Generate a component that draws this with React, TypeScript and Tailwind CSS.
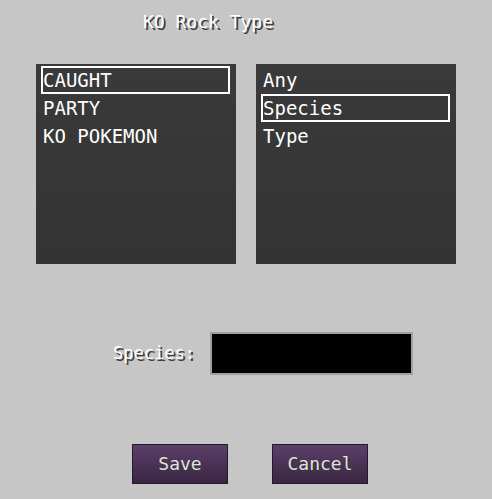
import React, { useState } from 'react';

const font = "font-['DejaVu_Sans_Mono','Liberation_Mono',monospace]";

const ListPanel: React.FC<{ items: string[]; selected: number; onSelect: (i: number) => void }> = ({ items, selected, onSelect }) => (
  <div className="w-[200px] h-[200px] bg-linear-to-b from-[#3a3a3a] to-[#333333] pt-[2px] pl-[5px]">
    {items.map((item, i) => (
      <div
        key={item}
        onClick={() => onSelect(i)}
        className={`w-[189px] h-[28px] border-2 flex items-center text-[19px] leading-none text-white ${
          i === selected ? 'border-white' : 'border-transparent'
        }`}
      >
        {item}
      </div>
    ))}
  </div>
);

export default function App() {
  const [source, setSource] = useState(0);
  const [mode, setMode] = useState(1);

  return (
    <div className={`w-[492px] h-[499px] bg-[#c6c6c6] flex flex-col ${font}`}>
      <div className="pt-[12px] pl-[143px] h-[64px] text-[18px] leading-[20px] text-white [text-shadow:2px_2px_0_#3f3f3f]">
        KO Rock Type
      </div>

      <div className="flex gap-[20px] pl-[36px]">
        <ListPanel items={['CAUGHT', 'PARTY', 'KO POKEMON']} selected={source} onSelect={setSource} />
        <ListPanel items={['Any', 'Species', 'Type']} selected={mode} onSelect={setMode} />
      </div>

      <div className="flex items-center pl-[113px] mt-[68px] h-[43px]">
        <div className="w-[97px] text-[17px] leading-none text-white [text-shadow:2px_2px_0_#3f3f3f]">Species:</div>
        <div className="w-[203px] h-[43px] border-2 border-[#a0a0a0] bg-black" />
      </div>

      <div className="flex gap-[44px] pl-[132px] mt-[69px]">
        {['Save', 'Cancel'].map((label) => (
          <button
            key={label}
            className="w-[96px] h-[40px] border border-[#231a28] bg-linear-to-b from-[#5c3f69] to-[#3a2643] text-[18px] leading-none text-[#e0e0e0] [text-shadow:2px_2px_0_#3a3a3a] flex items-center justify-center"
          >
            {label}
          </button>
        ))}
      </div>
    </div>
  );
}
